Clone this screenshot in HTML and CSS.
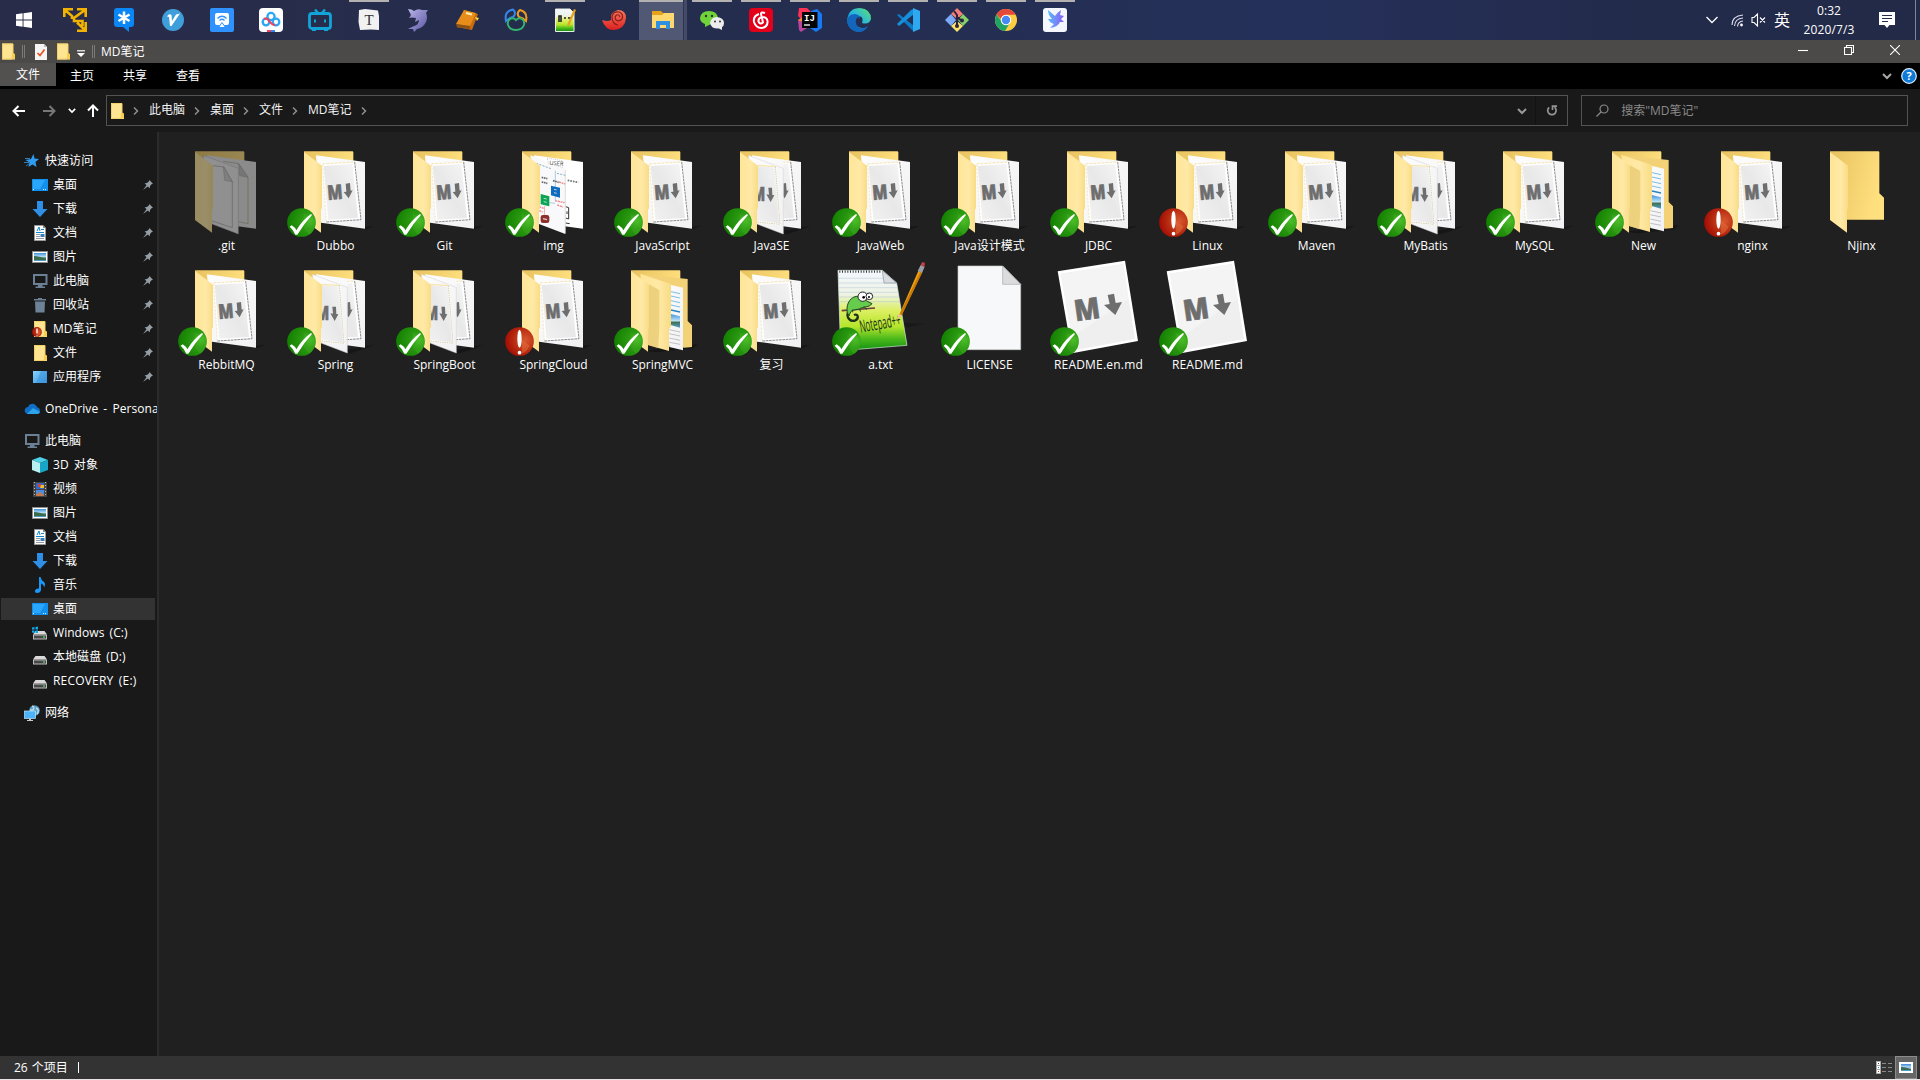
FILE: index.html
```html
<!DOCTYPE html>
<html lang="zh-CN">
<head>
<meta charset="utf-8">
<title>MD笔记</title>
<link rel="stylesheet" href="styles.css">
</head>
<body>
<svg class="sprite" width="0" height="0" aria-hidden="true">
  <defs>
    <linearGradient id="gBack" x1="0" x2="1" y1="0" y2="0.3"><stop offset="0" stop-color="#e8c25f"/><stop offset="1" stop-color="#ffe07f"/></linearGradient>
    <linearGradient id="gFlap" x1="0" x2="1"><stop offset="0" stop-color="#ffe596"/><stop offset=".6" stop-color="#ffe9a6"/><stop offset="1" stop-color="#f8dc86"/></linearGradient>
    <linearGradient id="gPaper" x1="0" x2="1" y1="0" y2="1"><stop offset="0" stop-color="#fdfdfd"/><stop offset="1" stop-color="#f1f1f3"/></linearGradient>
    <linearGradient id="gPhoto" x1="1" x2="0" y1="0" y2="1"><stop offset="0" stop-color="#f6f6f6"/><stop offset=".5" stop-color="#e8e8e8"/><stop offset="1" stop-color="#f2f2f2"/></linearGradient>
    <radialGradient id="gOk" cx=".8" cy=".45" r=".8"><stop offset="0" stop-color="#56c92f"/><stop offset=".35" stop-color="#2c9a12"/><stop offset="1" stop-color="#128000"/></radialGradient>
    <radialGradient id="gBad" cx=".7" cy=".45" r=".7"><stop offset="0" stop-color="#d8582f"/><stop offset=".6" stop-color="#b62a10"/><stop offset="1" stop-color="#a30c04"/></radialGradient>
    <linearGradient id="gSky" x1="0" x2="0" y1="0" y2="1"><stop offset="0" stop-color="#3f93dd"/><stop offset=".5" stop-color="#bfe3f8"/><stop offset=".6" stop-color="#44714f"/><stop offset="1" stop-color="#4aa0d0"/></linearGradient>
    <linearGradient id="gNote" x1="0" x2="0" y1="0" y2="1"><stop offset="0" stop-color="#f4f8ff"/><stop offset=".3" stop-color="#eef3e4"/><stop offset=".5" stop-color="#dcef62"/><stop offset=".7" stop-color="#b5e52c"/><stop offset=".85" stop-color="#4dba1c"/><stop offset="1" stop-color="#0e8f10"/></linearGradient>
    <linearGradient id="gEdge" x1="0" x2="1" y1="1" y2="0"><stop offset="0" stop-color="#0c59a4"/><stop offset=".5" stop-color="#25b4e6"/><stop offset="1" stop-color="#5fe06a"/></linearGradient>
    <linearGradient id="gBird" x1="0" x2="1"><stop offset="0" stop-color="#5ab8ff"/><stop offset="1" stop-color="#8a5cf0"/></linearGradient>
    <linearGradient id="gBlue" x1="0" x2="1" y1="0" y2="1"><stop offset="0" stop-color="#83d3ff"/><stop offset="1" stop-color="#3a93dc"/></linearGradient>
    <linearGradient id="gShell" x1="0" x2="0" y1="0" y2="1"><stop offset="0" stop-color="#f47a5c"/><stop offset="1" stop-color="#de1f1f"/></linearGradient>
    <linearGradient id="gDol" x1="0" x2="1" y1="0" y2="1"><stop offset="0" stop-color="#b9b4e8"/><stop offset="1" stop-color="#57539f"/></linearGradient>
    <clipPath id="cFront"><path d="M129 70H205V282H126V210L129 205Z"/></clipPath>
    <clipPath id="cBehind"><path d="M205 60H262V270H205Z"/></clipPath>
  </defs>

  <!-- Large folder parts, 3 units per pixel -->
  <symbol id="photo" viewBox="6 0 327 288">
    <path d="M130 72L227 66L246 239L142 246Z" fill="#fff"/>
    <path d="M134 78L220 72L237 234L148 239Z" fill="url(#gPhoto)"/>
    <path d="M130 72L227 66" stroke="#f0d78c" stroke-width="2" stroke-dasharray="9 3"/>
    <path d="M131 74L142 245" stroke="#eedba6" stroke-width="2" stroke-dasharray="7 4"/>
    <path d="M227 66L246 239L142 246" fill="none" stroke="#555" stroke-width="2" stroke-dasharray="8 2"/>
    <text class="mark" transform="translate(147 180) rotate(-5) scale(.78 1)" font-size="60">M</text>
    <path d="M200 131L213 129L215 152L221 151L209 175L194 156L202 155Z" fill="#6e6e6e"/>
  </symbol>
  <symbol id="folder" viewBox="6 0 327 288">
    <path d="M75 34H221L223 36V160L237 173V239H75Z" fill="url(#gBack)"/>
    <path d="M75 36L129 77V205L126 210V278L75 240Z" fill="url(#gFlap)"/>
  </symbol>
  <symbol id="folder-md" viewBox="6 0 327 288">
    <path d="M246 262L285 257L262 268Z" fill="#161616"/>
    <path d="M75 34H221L223 36V239H75Z" fill="url(#gBack)"/>
    <path d="M111 46L258 66V266L126 248Z" fill="url(#gPaper)"/>
    <use href="#photo" x="6" y="0" width="327" height="288"/>
    <path d="M75 36L129 77V205L126 210V278L75 240Z" fill="url(#gFlap)"/>
  </symbol>
  <symbol id="folder-md2" viewBox="6 0 327 288">
    <path d="M205 272L285 257L262 268L210 284Z" fill="#161616"/>
    <path d="M75 34H221L223 36V239H75Z" fill="url(#gBack)"/>
    <path d="M111 46L258 66V266L126 248Z" fill="url(#gPaper)"/>
    <g clip-path="url(#cBehind)"><use href="#photo" x="6" y="0" width="327" height="288"/></g>
    <path d="M100 46L205 85V282L126 252Z" fill="url(#gPaper)" stroke="#cfcfcf" stroke-width="1.5"/>
    <g clip-path="url(#cFront)">
      <path d="M120 77L181 79L195 253L120 244Z" fill="url(#gPhoto)" stroke="#fff" stroke-width="5"/>
      <path d="M129 77L181 79" fill="none" stroke="#f0d27a" stroke-width="2.4"/>
      <path d="M181 79L195 253L126 246" fill="none" stroke="#c4b98e" stroke-width="2" stroke-dasharray="5 2"/>
      <text class="mark" transform="translate(111 184) scale(.68 1)" font-size="60">M</text>
      <path d="M160 143H171L172 165L178 166L167 186L154 163L162 164Z" fill="#6e6e6e"/>
    </g>
    <path d="M75 36L129 77V205L126 210V278L75 240Z" fill="url(#gFlap)"/>
  </symbol>
  <symbol id="folder-git" viewBox="6 0 327 288">
    <g opacity=".55">
      <path d="M75 34H221L223 36V239H75Z" fill="url(#gBack)"/>
      <path d="M111 46L258 66V266L126 248Z" fill="#e4e4e4"/>
      <path d="M160 64L206 71L234 112V251L206 245" fill="none" stroke="#a39c80" stroke-width="2"/>
      <path d="M206 71L209 107L234 112Z" fill="#bdbdbd" stroke="#999" stroke-width="1.500"/>
      <path d="M100 46L205 85V282L126 252Z" fill="#ececec" stroke="#aaa" stroke-width="1.500"/>
      <path d="M129 77L162 81L187 125V263L127 243" fill="none" stroke="#999" stroke-width="2"/>
      <path d="M160 80L164 121L187 125Z" fill="#cdcdcd" stroke="#999" stroke-width="1.500"/>
      <path d="M75 36L129 77V205L126 210V278L75 240Z" fill="url(#gFlap)"/>
    </g>
  </symbol>
  <symbol id="folder-img" viewBox="6 0 327 288">
    <path d="M75 34H221L223 36V239H75Z" fill="url(#gBack)"/>
    <path d="M111 46L258 66V266L126 248Z" fill="#fff"/>
    <path d="M212 121L244 127" stroke="#777" stroke-width="5" stroke-dasharray="5 3"/>
    <path d="M206 200L215 203V237L206 234M206 249L218 251M210 214V222" fill="none" stroke="#333" stroke-width="3"/>
    <path d="M100 46L205 85V282L126 252Z" fill="#f9f9fb"/>
    <path d="M205 90V280" stroke="#ccc" stroke-width="2"/>
    <path d="M150 54L196 62V82L155 70Z" fill="#fff" stroke="#999" stroke-width="1.500" stroke-dasharray="3 3"/>
    <text class="tiny" x="157" y="74" font-size="17" transform="rotate(5 157 74)">USER</text>
    <path d="M118 70L162 86M180 100L205 106" stroke="#7fb0c2" stroke-width="3" stroke-dasharray="6 4"/>
    <path d="M175 92V185M158 188L174 190" stroke="#7cb8d6" stroke-width="2"/>
    <path d="M134 112L151 116M134 126L151 130M168 122L185 127" stroke="#666" stroke-width="5" stroke-dasharray="5 2"/>
    <path d="M186 126L204 132M175 182L203 188M181 195L198 201M127 200L140 205M127 212L137 216" stroke="#f0868a" stroke-width="4" stroke-dasharray="6 2"/>
    <path d="M162 137L189 143V173L162 166Z" fill="#0d6cbf"/>
    <path d="M131 162L157 169V199L131 193Z" fill="#0ba452"/>
    <path d="M171 148L179 150M171 158L179 160M140 175L149 177M140 185L149 187" stroke="#fff" stroke-width="3" opacity=".7"/>
    <path d="M143 198L142 226" stroke="#e88" stroke-width="2"/>
    <rect x="131" y="225" width="26" height="24" rx="7" fill="#8c2f2f"/><path d="M138 236L150 239" stroke="#e8c8c8" stroke-width="4"/>
    <path d="M75 36L129 77V205L126 210V278L75 240Z" fill="url(#gFlap)"/>
  </symbol>
  <symbol id="folder-docs" viewBox="6 0 327 288">
    <path d="M120 275L275 255L262 268L150 280Z" fill="#161616"/>
    <path d="M75 34H221L223 36V239H75Z" fill="url(#gBack)"/>
    <path d="M103 45L245 60V186L258 199V264L235 266L150 250Z" fill="#f3d277"/>
    <path d="M170 72L231 86V274L190 264Z" fill="url(#gPaper)"/>
    <path d="M195 98L222 104M195 111L222 117M195 125L222 131M195 138L222 144" stroke="#79bfe6" stroke-width="3"/>
    <path d="M195 153L222 159" stroke="#2383c6" stroke-width="4"/>
    <path d="M194 165L222 172V206L194 198Z" fill="url(#gSky)"/>
    <path d="M190 212L222 219M190 224L222 231M190 237L222 244M190 250L222 256" stroke="#b5b5ba" stroke-width="2.500"/>
    <path d="M103 45L195 75V203L189 209V276L126 258Z" fill="url(#gFlap)"/>
    <path d="M129 76L160 93V207L157 268L126 258Z" fill="#e8ca72" opacity=".75"/>
    <path d="M75 36L129 77V205L126 210V278L75 240Z" fill="url(#gFlap)"/>
  </symbol>
  <symbol id="file-md" viewBox="6 0 327 288">
    <path d="M47 37L249 5L288 246L90 283Z" fill="#fff"/>
    <path d="M56 44L243 15L279 240L97 274Z" fill="#efefef"/>
    <path d="M56 44L243 15L260 120L90 235Z" fill="#f4f4f4"/>
    <text class="mark" transform="translate(101 187) rotate(-8) scale(.9 1)" font-size="88">M</text>
    <path d="M197 108L216 104L221 132L240 129L220 168L186 138L203 135Z" fill="#6e6e6e"/>
  </symbol>
  <symbol id="file-blank" viewBox="6 0 327 288">
    <path d="M75 21H209L263 76V272H75Z" fill="#f7f8fa" stroke="#c9c9c9" stroke-width="2"/>
    <path d="M209 21V76H263Z" fill="#dcdcde" stroke="#a9a9ab" stroke-width="2"/>
  </symbol>
  <symbol id="file-note" viewBox="6 0 327 288">
    <path d="M230 190L300 195L250 205Z" fill="#191919"/>
    <path d="M42 34H175L218 72L249 259L50 275Z" fill="url(#gNote)" stroke="#d9efe0" stroke-width="2"/>
    <path d="M43 58H190M44 72H216M45 86H219M45 100H221M46 114H224M46 128H226" stroke="#9db7d8" stroke-width="1.600" opacity=".7"/>
    <path d="M46 38H170" stroke="#333" stroke-width="7" stroke-dasharray="3 5"/>
    <path d="M175 35L180 72H218Z" fill="#d9dde2" stroke="#8a8f98" stroke-width="2"/>
    <path d="M53 155L153 147" stroke="#6a3f3f" stroke-width="5"/>
    <path d="M72 160C66 176 80 190 94 184C106 178 102 162 90 168" fill="none" stroke="#1e3018" stroke-width="7"/>
    <path d="M70 162C64 130 84 110 104 112L132 128L144 134C136 146 118 142 106 150L84 154C80 160 76 164 76 170Z" fill="#67cc4e" stroke="#1d4a1c" stroke-width="3"/>
    <path d="M86 152V160M106 150L110 158M120 142L128 152" stroke="#1d4a1c" stroke-width="3"/>
    <circle cx="116" cy="113" r="14" fill="#fff" stroke="#222" stroke-width="3"/><circle cx="136" cy="112" r="10" fill="#fff" stroke="#222" stroke-width="3"/>
    <circle cx="119" cy="115" r="4"/><circle cx="135" cy="114" r="3"/>
    <text class="npp" transform="translate(110 221) rotate(-10) scale(.46 1)" font-size="52">Notepad++</text>
    <path d="M219 182L283 36L294 41L233 169Z" fill="#f0a30f"/><path d="M228 163L289 39L294 41L233 169Z" fill="#c97808"/>
    <path d="M219 182L221 166L233 169Z" fill="#e8c79a"/>
    <path d="M281 36L290 18L302 23L294 42Z" fill="#9b9fa5"/><path d="M290 18L294 10Q300 8 303 13L301 24Z" fill="#c14048"/>
  </symbol>
  <symbol id="ok" viewBox="0 0 87 87">
    <circle cx="43.500" cy="43.500" r="43" fill="url(#gOk)"/>
    <path d="M50 15L86 44Q84 68 66 80L50 60Z" fill="#3fae22" opacity=".45"/>
    <path d="M8 56L14 52Q24 58 28 67Q46 36 72 18L75 21Q52 46 31 80H25Q18 64 8 56Z" fill="#fff"/>
  </symbol>
  <symbol id="bad" viewBox="0 0 87 87">
    <circle cx="43.500" cy="43.500" r="43" fill="url(#gBad)"/>
    <path d="M50 37L74 56Q64 76 50 80Z" fill="#e8713c" opacity=".5"/>
    <ellipse cx="43.500" cy="35" rx="6.500" ry="27" fill="#fff"/><circle cx="43.500" cy="77" r="5.500" fill="#fff"/>
  </symbol>

  <!-- Small icons -->
  <symbol id="s-folder" viewBox="0 0 16 16"><path d="M2 0H13V11H15V16H2Z" fill="#ffe592"/><path d="M2.500.5H13V10.500L12 15.500H2.500Z" fill="none" stroke="#f3d068"/><path d="M12 10.500L13 9.500L15 10.500V15.500H12Z" fill="#f7cf4c"/></symbol>
  <symbol id="s-check" viewBox="0 0 12 16"><path d="M0 0H9L12 3V16H0Z" fill="#f4f4f4"/><path d="M9 0V3H12Z" fill="#bbb"/><path d="M2.500 9L5 11.500L9.500 5.500" fill="none" stroke="#e8501c" stroke-width="1.700"/></symbol>
  <symbol id="s-star" viewBox="0 0 16 16"><path d="M9.500 1L10.500 5.500L15 6L11.500 9L12.500 14L8.500 11.500L4.500 14L5.500 9.500L1.500 7L7 6Z" fill="#2f9cf0"/><path d="M1 5.500H6M0 9.500H5M2 13L6 10" stroke="#2f7fc0" stroke-width="1"/></symbol>
  <symbol id="s-desk" viewBox="0 0 16 16"><rect y="2" width="16" height="12" fill="#1190ee"/><path d="M1 3H13L8 12H1Z" fill="#2ba6ff"/><path d="M1 12.500H3M11 12.500H15" stroke="#d8f0ff" stroke-dasharray="1 1"/></symbol>
  <symbol id="s-down" viewBox="0 0 16 16"><path d="M5 0H11V8H15.500L8 16L.5 8H5Z" fill="#2f8ee6"/></symbol>
  <symbol id="s-doc" viewBox="0 0 16 16"><path d="M2.500.5H11L13.500 3V15.500H2.500Z" fill="#fff" stroke="#9a9a9a"/><path d="M11 0V3H14Z" fill="#888"/><path d="M5 6L7 2L8 6M9 4.500H12M4 7.500H12" stroke="#1587c9" fill="none"/><path d="M4 9.500H8M4 11.500H8M4 13.500H12" stroke="#9a9a9a"/><rect x="8.500" y="9" width="4" height="3" fill="#2f7fbf"/></symbol>
  <symbol id="s-pic" viewBox="0 0 16 16"><rect x=".5" y="2.500" width="15" height="11" fill="#fff" stroke="#8d8d8d"/><rect x="2" y="4" width="12" height="8" fill="url(#gSky)"/><path d="M2 7Q7 7 14 10V11H2Z" fill="#3c6a4d"/></symbol>
  <symbol id="s-pc" viewBox="0 0 16 16"><rect x="2" y="2" width="12.500" height="9" fill="none" stroke="#6b8095" stroke-width="2"/><path d="M6 12H10.500V13.500H13V15H3.500V13.500H6Z" fill="#6b8095"/></symbol>
  <symbol id="s-bin" viewBox="0 0 16 16"><path d="M2 2H6V1H10V2H14V3.500H2ZM3 4.500H13L12.500 15.500H3.500Z" fill="#6d8296"/></symbol>
  <symbol id="s-app" viewBox="0 0 16 16"><rect x="1" y="2" width="14" height="12" fill="url(#gBlue)"/><path d="M9 2H15V14H4Z" fill="#3a93dc" opacity=".55"/></symbol>
  <symbol id="s-cloud" viewBox="0 0 16 12"><path d="M2 10Q0 9 1 6Q2 4 4 4Q6 0 10 1Q12 2 13 4Q16 5 16 8Q16 11 13 11H3Z" fill="#0f6fc6"/><path d="M3 11L9 5L16 9Q15 11 13 11Z" fill="#2da4ea"/></symbol>
  <symbol id="s-cube" viewBox="0 0 16 16"><path d="M0 3L8 0L16 3L8 6Z" fill="#4fd2e8"/><path d="M0 3L8 6V16L0 13Z" fill="#b9f1f3"/><path d="M16 3L8 6V16L16 13Z" fill="#17a6c8"/></symbol>
  <symbol id="s-film" viewBox="0 0 16 16"><rect x="1" y="1" width="14" height="15" fill="#444"/><path d="M2.500 1V16M13.500 1V16" stroke="#bbb" stroke-dasharray="1 2"/><rect x="4" y="2" width="8" height="6" fill="#3465c9"/><rect x="4" y="9" width="8" height="6" fill="#4b8be0"/><path d="M6 3H9V6H6Z" fill="#d6452f"/><path d="M9 4H12V7H8Z" fill="#e8c22f"/><path d="M4 13L8 11L12 14V15H4Z" fill="#c47a4f"/></symbol>
  <symbol id="s-music" viewBox="0 0 16 16"><path d="M7 0H8.500Q9 3 12 5Q14 7 12 10.500Q12 7.500 9 6.500V13Q8.500 16 5 16Q2.500 15.500 3 13.500Q4 11 7 11.500Z" fill="#1b96f5"/></symbol>
  <symbol id="s-disk" viewBox="0 0 16 16"><path d="M3.500 7H12.500L15 10.500H1Z" fill="#d9d9d9"/><rect x="1" y="10.500" width="14" height="5" fill="#bdbdbd"/><rect x="2" y="11.500" width="12" height="3" fill="#474747"/><rect x="11" y="12.500" width="2" height="1" fill="#5f5"/></symbol>
  <symbol id="s-win" viewBox="0 0 16 16"><path d="M3.500 6H12.500L15 9.500H1Z" fill="#d9d9d9"/><rect x="1" y="9.500" width="14" height="5" fill="#bdbdbd"/><rect x="2" y="10.500" width="12" height="3" fill="#474747"/><rect x="11" y="11.500" width="2" height="1" fill="#5f5"/><path d="M0 2.500L2.500 2V4.500H0ZM3.500 2L6 1.500V4.500H3.500ZM0 5.500H2.500V8L0 7.500ZM3.500 5.500H6V8H3.500Z" fill="#11a9ee"/></symbol>
  <symbol id="s-net" viewBox="0 0 16 16"><circle cx="10.500" cy="5.500" r="5.300" fill="#5a9cc0"/><path d="M8 1Q11 2 9 5L6 5M12 3Q16 5 13 9" fill="none" stroke="#b8dcef" stroke-width="1.500"/><rect x=".5" y="6" width="11" height="7.500" fill="#4bb4fb" stroke="#bfe5ff" stroke-width=".7"/><path d="M5 13.500H7V15H9V16H3V15H5Z" fill="#c5ccd2"/></symbol>
  <symbol id="s-pin" viewBox="0 0 10 10"><path d="M6.300 0L10 3.700L8.800 4L7 6L6.800 8.300L4.700 6.500L0 10L3.500 5.300L1.700 3.300L4 3L6 1.200Z" fill="#949ea6"/></symbol>
  <symbol id="sep" viewBox="0 0 6 8"><path d="M1 .5L4.500 4L1 7.500" fill="none" stroke="#8f8f8f" stroke-width="1.500"/></symbol>
  <symbol id="chev" viewBox="0 0 10 8"><path d="M1 2L5 6L9 2" fill="none" stroke="currentColor" stroke-width="2"/></symbol>
</svg>

<div class="taskbar">
  <div class="start"><svg width="16" height="16" viewBox="0 0 16 16" fill="#fff"><path d="M0 2.300L6.600 1.300V7.500H0ZM7.500 1.200L16 0V7.500H7.500ZM0 8.400H6.600V14.700L0 13.700ZM7.500 8.400H16V16L7.500 14.800Z"/></svg></div>
  <div class="task"><svg viewBox="0 0 24 24"><path d="M1.300 9V1.300H10M2 2L9 8V11M22.700 9V1.300H14M22 2L11 10V13H19.500V18M22.700 14V22.700H14M22 22L14 14.500" fill="none" stroke="#f2b200" stroke-width="2.600"/></svg></div>
  <div class="task"><svg viewBox="0 0 24 24"><path d="M5 0H19Q22 0 22 3V16Q22 19 19 19H17V24L11 19H5Q2 19 2 16V3Q2 0 5 0Z" fill="#0a86f5"/><path d="M12 3.500V16M6.500 6.500L17.500 13M17.500 6.500L6.500 13" stroke="#fff" stroke-width="2.500"/></svg></div>
  <div class="task"><svg viewBox="0 0 24 24"><circle cx="12" cy="12" r="11" fill="#3f9fdb"/><path d="M6 8.500Q8 5 10.500 7L11 13L15 6.500L19 5.500L10.500 18H9Q8.500 13 8 9Z" fill="#fff"/></svg></div>
  <div class="task"><svg viewBox="0 0 24 24"><rect width="24" height="24" rx="2" fill="#2f92ff"/><rect x="5" y="5" width="14" height="12" rx="2" fill="#fff"/><path d="M7.500 10.500Q12 6 16.500 10.500M9.500 12.500Q12 10 14.500 12.500" fill="none" stroke="#2f92ff" stroke-width="1.300"/><path d="M8.500 19.500L12 14.500L15.500 19.500Z" fill="#fff" stroke="#2f92ff"/></svg></div>
  <div class="task"><svg viewBox="0 0 24 24"><rect width="24" height="24" rx="4" fill="#fff"/><circle cx="12" cy="8.500" r="3.600" fill="none" stroke="#2aa7f5" stroke-width="2.300"/><circle cx="7" cy="14" r="3.300" fill="none" stroke="#2aa7f5" stroke-width="2.300"/><circle cx="17" cy="14" r="3.300" fill="none" stroke="#2aa7f5" stroke-width="2.300"/><path d="M5 11Q8 9 11 14Q13 17 16 17" fill="none" stroke="#f33f58" stroke-width="2"/><path d="M8 22H12V24H8Z" fill="#f33f58"/><path d="M12 22H16V24H12Z" fill="#2a8bf5"/></svg></div>
  <div class="task"><svg viewBox="0 0 24 24"><path d="M7 1.500L10 5M17 1.500L14 5" stroke="#12a4d8" stroke-width="2.400"/><rect x="1.500" y="5.500" width="21" height="15" rx="2.500" fill="none" stroke="#12a4d8" stroke-width="2.800"/><path d="M7 11.500V14.500M17 11.500V14.500" stroke="#12a4d8" stroke-width="2"/><path d="M4 21H8V23H4ZM16 21H20V23H16Z" fill="#12a4d8"/></svg></div>
  <div class="task open"><svg viewBox="0 0 24 24"><path d="M2 2L8 1L21 2.500L22 8V22L14 21.500L3 22L1.500 14Z" fill="#f1f1f1"/><text x="12" y="17" font-size="15" text-anchor="middle" font-family="Liberation Serif, serif" fill="#333">T</text></svg></div>
  <div class="task"><svg viewBox="0 0 24 24"><path d="M2 1Q6 1 8 3Q12 0 16 2L22 2L20 5Q22 9 20 14Q17 20 11 21L8 24L7 21L2 21L7 18.500Q13 17 13 12L9 14L10 10Q5 9 3 10Q6 7 4 5Z" fill="url(#gDol)"/></svg></div>
  <div class="task"><svg viewBox="0 0 24 24"><path d="M9 2L23 6L17 22L2 19Z" fill="#c96a0c"/><path d="M9 2L21 5L15 18L1 16Z" fill="#e88d1c"/><path d="M1 16L15 18L15 21L2 19.500Z" fill="#8d5416"/><path d="M11 5L17 6.500" stroke="#fff0b0" stroke-width="2"/><path d="M20 9L24 10L22 13Z" fill="#ffd23d"/></svg></div>
  <div class="task"><svg viewBox="0 0 24 24" fill="none" stroke-width="2"><path d="M2 13Q0 3 9 1.500Q13 5 9 9Q5 10 2 13Z" stroke="#3487ee"/><path d="M22 13Q24 4 16 2Q12 5 15 9Q19 10 22 13Z" stroke="#f29a1f"/><path d="M12 12Q15 9 18 11Q21 13 20 17Q18 22 12 22Q6 22 4 17Q3 13 6 11Q9 9 12 12Z" stroke="#33b56b"/></svg></div>
  <div class="task open"><svg viewBox="0 0 24 24"><path d="M2.500 1H17L21 5V23.500H2.500Z" fill="url(#gNote)" stroke="#e8efe4"/><path d="M6 14V8H8V14M11 10H13M15 10H18" fill="none" stroke="#222" stroke-width="1.600"/><path d="M14 17L21 1L23 2L16 18Z" fill="#e9a21c"/></svg></div>
  <div class="task"><svg viewBox="0 0 24 24"><path d="M0 12Q6 14 9 12Q8 4 16 2Q24 2 24 10Q23 21 12 22Q3 22 0 12Z" fill="url(#gShell)"/><path d="M18 9Q17 6 14.500 7Q12 9 14 12Q17 14 20 11Q22 6 17 4Q11 3 10 9Q10 16 16 17" fill="none" stroke="#8d1d1d" stroke-width="1.200"/></svg></div>
  <div class="task open active"><svg viewBox="0 0 24 24"><path d="M1 3H10L12 5H23V20H1Z" fill="#e6a21c"/><path d="M1 7H11L13 5H23V20H1Z" fill="#ffd970"/><path d="M5 13H19V21H15V17H9V21H5Z" fill="#2f8fe0"/></svg></div>
  <div class="task open"><svg viewBox="0 0 24 24"><path d="M9 3Q17 3 18 10Q12 10 11 16L5 19V16Q0 14 0 10Q1 3 9 3Z" fill="#6fd43a"/><path d="M17 9Q24 10 24 15Q24 18 22 19V22L19 20.500Q11 21 10 15Q11 9 17 9Z" fill="#ededed"/><g fill="#333"><circle cx="6" cy="8" r="1.200"/><circle cx="12" cy="8" r="1.200"/><circle cx="15" cy="13.500" r="1"/><circle cx="20" cy="13.500" r="1"/></g></svg></div>
  <div class="task open"><svg viewBox="0 0 24 24"><rect width="24" height="24" rx="4" fill="#e2001b"/><path d="M10 6Q4 8 5 14Q7 20 12.500 20Q19 19 18.500 13Q18 9 13 9Q9 10 9.500 13.500Q11 17 14 14.500L12 6Q12 3.500 16 5" fill="none" stroke="#fff" stroke-width="2"/></svg></div>
  <div class="task open"><svg viewBox="0 0 24 24"><path d="M1 0H9L13 4L4 12L0 8Z" fill="#fc3158"/><path d="M13 3L19 1L24 6V20L18 24L12 20Z" fill="#1779f5"/><path d="M0 12L5 9V20L9 20L3 24L1 22Z" fill="#b8459c"/><path d="M0 12L5 9V14Z" fill="#f98a1f"/><rect x="4" y="4" width="15.500" height="16" fill="#050505"/><text x="6" y="13" font-size="9" font-weight="700" fill="#fff" font-family="Liberation Mono, monospace">IJ</text><path d="M6 17H12" stroke="#fff" stroke-width="1.300"/></svg></div>
  <div class="task open"><svg viewBox="0 0 24 24"><path d="M0 13Q1 0 13 0Q24 1 24 11Q22 17 15 15Q17 9 12 8Q7 9 8 15Q10 21 19 20Q15 25 9 23.500Q1 21 0 13Z" fill="url(#gEdge)"/><path d="M0 13Q1 6 8 6Q14 7 13 11Q12 8 10 10Q7 14 11 19Q15 22 21 18Q18 24 11 24Q1 22 0 13Z" fill="#1267bd"/></svg></div>
  <div class="task open"><svg viewBox="0 0 24 24"><path d="M1 7L3 6L18 18V23L16 22Z" fill="#0a7bc4"/><path d="M1 16L3 18L18 6V1L15 2Z" fill="#1690da"/><path d="M17 0L24 3V21L17 24Z" fill="#2fa8f2"/></svg></div>
  <div class="task open"><svg viewBox="0 0 24 24"><path d="M12 0L18 6L12 11L6 6Z" fill="#f37d79"/><path d="M18 6L24 12L18 18L13 12Z" fill="#85d268"/><path d="M6 6L11 12L6 18L0 12Z" fill="#7baaf7"/><path d="M12 13L18 18L12 24L6 18Z" fill="#fbe36a"/><path d="M9 3L12 7V18M12 9L17 13" fill="none" stroke="#2b2340" stroke-width="2"/><circle cx="12" cy="18" r="2" fill="#2b2340"/><circle cx="17" cy="12.500" r="2" fill="#2b2340"/></svg></div>
  <div class="task open"><svg viewBox="0 0 24 24"><circle cx="12" cy="12" r="11" fill="#ffcd42"/><path d="M2.500 6.500A11 11 0 0 1 21.600 6.700H12Q8 7 7 11Z" fill="#e5493a"/><path d="M2.500 6.500A11 11 0 0 0 11 23L15.500 15.500Q9 18 7 12.500Z" fill="#1fa463"/><circle cx="12" cy="12" r="5.200" fill="#fff"/><circle cx="12" cy="12" r="4.200" fill="#4688f4"/></svg></div>
  <div class="task open"><svg viewBox="0 0 24 24"><rect width="24" height="24" rx="3" fill="#f4f7ff"/><path d="M5 2L12 8Q15 4 18 2L17 7L21 8L18 11L21 14L17 14Q15 19 7 20L11 16Q7 15 5 11L9 11Q5 7 5 2Z" fill="url(#gBird)"/></svg></div>

  <div class="tray">
    <svg width="12" height="8" viewBox="0 0 12 8"><path d="M.5 1L6 6.500L11.500 1" fill="none" stroke="#fff" stroke-width="1.300"/></svg>
    <svg class="wifi" width="13" height="13" viewBox="0 0 13 13" fill="none" stroke="#dde" stroke-width="1.100"><path d="M1 11Q1 2 12 1M3.500 12Q4 4.500 12 4M6.500 12.500Q7 7.500 12 7"/><circle cx="10.500" cy="11" r="1.400" fill="#fff" stroke="none"/></svg>
    <svg class="vol" width="15" height="14" viewBox="0 0 15 14" fill="none" stroke="#fff" stroke-width="1.100"><path d="M1 4.500H3L6.500 1V13L3 9.500H1ZM9 4.500L14 9.500M14 4.500L9 9.500"/></svg>
    <span class="ime">英</span>
    <div class="clock"><span>0:32</span><span>2020/7/3</span></div>
    <svg class="note" width="16" height="16" viewBox="0 0 16 16"><path d="M0 0H16V13H10.500L8 16L5.500 13H0Z" fill="#fff"/><path d="M3 3.500H13M3 6.500H13M3 9.500H9" stroke="#252d4c" stroke-width="1.200"/></svg>
    <i class="peek"></i>
  </div>
</div>

<div class="titlebar">
  <svg class="tb-folder" width="16" height="17"><use href="#s-folder"/></svg>
  <i class="grip g1"></i>
  <svg class="tb-check" width="12" height="16"><use href="#s-check"/></svg>
  <svg class="tb-folder2" width="16" height="17"><use href="#s-folder"/></svg>
  <svg class="tb-drop" width="8" height="7" viewBox="0 0 8 7"><path d="M0 .8H8" stroke="#fff" stroke-width="1.200"/><path d="M0 3H8L4 7Z" fill="#fff"/></svg>
  <i class="grip g2"></i>
  <span class="title">MD笔记</span>
  <div class="controls">
    <svg viewBox="0 0 10 10"><path d="M0 5.500H10"/></svg>
    <svg viewBox="0 0 10 10"><path d="M.5 2.500H7.500V9.500H.5ZM2.500 2.500V.5H9.500V7.500H7.500"/></svg>
    <svg viewBox="0 0 10 10"><path d="M0 0L10 10M10 0L0 10"/></svg>
  </div>
</div>

<div class="ribbon">
  <span class="tab file">文件</span><span class="tab">主页</span><span class="tab">共享</span><span class="tab">查看</span>
  <svg class="expand" width="10" height="8"><use href="#chev"/></svg>
  <svg class="help" width="16" height="16" viewBox="0 0 16 16"><circle cx="8" cy="8" r="7.300" fill="#0e7ad8" stroke="#dbeafa" stroke-width="1.200"/><text x="8" y="12" font-size="11" font-weight="700" text-anchor="middle" fill="#fff" font-family="Open Sans, sans-serif">?</text></svg>
</div>

<div class="navrow">
  <svg class="back" width="13" height="12" viewBox="0 0 13 12"><path d="M13 6H2M6.500 1L1.500 6L6.500 11" fill="none" stroke="#fff" stroke-width="2"/></svg>
  <svg class="fwd" width="13" height="12" viewBox="0 0 13 12"><path d="M0 6H11M6.500 1L11.500 6L6.500 11" fill="none" stroke="#777" stroke-width="2"/></svg>
  <svg class="hist" width="8" height="7"><use href="#chev"/></svg>
  <svg class="up" width="12" height="13" viewBox="0 0 12 13"><path d="M6 13V2M1 6.500L6 1.500L11 6.500" fill="none" stroke="#fff" stroke-width="2"/></svg>
  <div class="address">
    <svg class="a-folder" width="16" height="16"><use href="#s-folder"/></svg>
    <svg class="sep" width="6" height="8"><use href="#sep"/></svg><span>此电脑</span>
    <svg class="sep" width="6" height="8"><use href="#sep"/></svg><span>桌面</span>
    <svg class="sep" width="6" height="8"><use href="#sep"/></svg><span>文件</span>
    <svg class="sep" width="6" height="8"><use href="#sep"/></svg><span>MD笔记</span>
    <svg class="sep" width="6" height="8"><use href="#sep"/></svg>
    <svg class="a-drop" width="10" height="8"><use href="#chev"/></svg>
    <div class="refresh"><svg width="12" height="13" viewBox="0 0 12 13"><path d="M8.500 3.200A4.200 4.200 0 1 1 3.200 3.300M6.500 6V2.200H11" fill="none" stroke="#949494" stroke-width="1.700"/><path d="M1.500 2.200H5V5.500" fill="none" stroke="#949494" stroke-width="0"/></svg></div>
  </div>
  <div class="search">
    <svg width="13" height="13" viewBox="0 0 13 13" fill="none" stroke="#8a8a8a" stroke-width="1.200"><circle cx="8" cy="5" r="4"/><path d="M5 8L.5 12.500"/></svg>
    <span>搜索"MD笔记"</span>
  </div>
</div>

<div class="body">
  <div class="side">
    <div class="row top"><svg><use href="#s-star"/></svg><span>快速访问</span></div>
    <div class="row"><svg><use href="#s-desk"/></svg><span>桌面</span><svg class="pin"><use href="#s-pin"/></svg></div>
    <div class="row"><svg><use href="#s-down"/></svg><span>下载</span><svg class="pin"><use href="#s-pin"/></svg></div>
    <div class="row"><svg><use href="#s-doc"/></svg><span>文档</span><svg class="pin"><use href="#s-pin"/></svg></div>
    <div class="row"><svg><use href="#s-pic"/></svg><span>图片</span><svg class="pin"><use href="#s-pin"/></svg></div>
    <div class="row"><svg><use href="#s-pc"/></svg><span>此电脑</span><svg class="pin"><use href="#s-pin"/></svg></div>
    <div class="row"><svg><use href="#s-bin"/></svg><span>回收站</span><svg class="pin"><use href="#s-pin"/></svg></div>
    <div class="row"><svg><use href="#s-folder"/><use href="#bad" x="0" y="6" width="10" height="10"/></svg><span>MD笔记</span><svg class="pin"><use href="#s-pin"/></svg></div>
    <div class="row"><svg><use href="#s-folder"/></svg><span>文件</span><svg class="pin"><use href="#s-pin"/></svg></div>
    <div class="row"><svg><use href="#s-app"/></svg><span>应用程序</span><svg class="pin"><use href="#s-pin"/></svg></div>
    <div class="row top gap"><svg><use href="#s-cloud"/></svg><span>OneDrive - Persona</span></div>
    <div class="row top gap"><svg><use href="#s-pc"/></svg><span>此电脑</span></div>
    <div class="row"><svg><use href="#s-cube"/></svg><span>3D 对象</span></div>
    <div class="row"><svg><use href="#s-film"/></svg><span>视频</span></div>
    <div class="row"><svg><use href="#s-pic"/></svg><span>图片</span></div>
    <div class="row"><svg><use href="#s-doc"/></svg><span>文档</span></div>
    <div class="row"><svg><use href="#s-down"/></svg><span>下载</span></div>
    <div class="row"><svg><use href="#s-music"/></svg><span>音乐</span></div>
    <div class="row selected"><svg><use href="#s-desk"/></svg><span>桌面</span></div>
    <div class="row"><svg><use href="#s-win"/></svg><span>Windows (C:)</span></div>
    <div class="row"><svg><use href="#s-disk"/></svg><span>本地磁盘 (D:)</span></div>
    <div class="row"><svg><use href="#s-disk"/></svg><span class="wide">RECOVERY (E:)</span></div>
    <div class="row top gap"><svg><use href="#s-net"/></svg><span>网络</span></div>
  </div>

  <div class="files">
    <div class="item"><svg class="big"><use href="#folder-git"/></svg><span>.git</span></div>
    <div class="item"><svg class="big"><use href="#folder-md"/></svg><svg class="badge"><use href="#ok"/></svg><span>Dubbo</span></div>
    <div class="item"><svg class="big"><use href="#folder-md"/></svg><svg class="badge"><use href="#ok"/></svg><span>Git</span></div>
    <div class="item"><svg class="big"><use href="#folder-img"/></svg><svg class="badge"><use href="#ok"/></svg><span>img</span></div>
    <div class="item"><svg class="big"><use href="#folder-md"/></svg><svg class="badge"><use href="#ok"/></svg><span>JavaScript</span></div>
    <div class="item"><svg class="big"><use href="#folder-md2"/></svg><svg class="badge"><use href="#ok"/></svg><span>JavaSE</span></div>
    <div class="item"><svg class="big"><use href="#folder-md"/></svg><svg class="badge"><use href="#ok"/></svg><span>JavaWeb</span></div>
    <div class="item"><svg class="big"><use href="#folder-md"/></svg><svg class="badge"><use href="#ok"/></svg><span>Java设计模式</span></div>
    <div class="item"><svg class="big"><use href="#folder-md"/></svg><svg class="badge"><use href="#ok"/></svg><span>JDBC</span></div>
    <div class="item"><svg class="big"><use href="#folder-md"/></svg><svg class="badge"><use href="#bad"/></svg><span>Linux</span></div>
    <div class="item"><svg class="big"><use href="#folder-md"/></svg><svg class="badge"><use href="#ok"/></svg><span>Maven</span></div>
    <div class="item"><svg class="big"><use href="#folder-md2"/></svg><svg class="badge"><use href="#ok"/></svg><span>MyBatis</span></div>
    <div class="item"><svg class="big"><use href="#folder-md"/></svg><svg class="badge"><use href="#ok"/></svg><span>MySQL</span></div>
    <div class="item"><svg class="big"><use href="#folder-docs"/></svg><svg class="badge"><use href="#ok"/></svg><span>New</span></div>
    <div class="item"><svg class="big"><use href="#folder-md"/></svg><svg class="badge"><use href="#bad"/></svg><span>nginx</span></div>
    <div class="item"><svg class="big"><use href="#folder"/></svg><span>Njinx</span></div>
    <div class="item"><svg class="big"><use href="#folder-md"/></svg><svg class="badge"><use href="#ok"/></svg><span>RebbitMQ</span></div>
    <div class="item"><svg class="big"><use href="#folder-md2"/></svg><svg class="badge"><use href="#ok"/></svg><span>Spring</span></div>
    <div class="item"><svg class="big"><use href="#folder-md2"/></svg><svg class="badge"><use href="#ok"/></svg><span>SpringBoot</span></div>
    <div class="item"><svg class="big"><use href="#folder-md"/></svg><svg class="badge"><use href="#bad"/></svg><span>SpringCloud</span></div>
    <div class="item"><svg class="big"><use href="#folder-docs"/></svg><svg class="badge"><use href="#ok"/></svg><span>SpringMVC</span></div>
    <div class="item"><svg class="big"><use href="#folder-md"/></svg><svg class="badge"><use href="#ok"/></svg><span>复习</span></div>
    <div class="item"><svg class="big"><use href="#file-note"/></svg><svg class="badge"><use href="#ok"/></svg><span>a.txt</span></div>
    <div class="item"><svg class="big"><use href="#file-blank"/></svg><svg class="badge"><use href="#ok"/></svg><span>LICENSE</span></div>
    <div class="item"><svg class="big"><use href="#file-md"/></svg><svg class="badge"><use href="#ok"/></svg><span class="wide">README.en.md</span></div>
    <div class="item"><svg class="big"><use href="#file-md"/></svg><svg class="badge"><use href="#ok"/></svg><span class="wide">README.md</span></div>
  </div>
</div>

<div class="status">
  <span>26 个项目</span><i class="bar"></i>
  <svg class="details" width="16" height="13" viewBox="0 0 16 13"><path d="M0 0H5V13H0Z" fill="#aaa"/><path d="M1 1H4V4H1ZM1 5H4V8H1ZM1 9H4V12H1Z" fill="#fff"/><path d="M2 2H3V3H2Z" fill="#444"/><path d="M2 6H3V7H2Z" fill="#28c"/><path d="M2 10H3V11H2Z" fill="#c22"/><path d="M6 2.500H10M12 2.500H16M6 6.500H10M12 6.500H16M6 10.500H10M12 10.500H16" stroke="#8a8a8a"/></svg>
  <div class="large"><svg width="14" height="11" viewBox="0 0 14 11"><rect width="14" height="11" fill="#fff"/><rect x="2" y="2" width="10" height="7" fill="#9cc8ee"/><path d="M2 2H12V3.500H2Z" fill="#4f94dc"/><path d="M2 5Q6 5 12 7V8H2Z" fill="#3c6a4d"/><path d="M2 8H12V9H2Z" fill="#4a9ad0"/></svg></div>
</div>
</body>
</html>
```
FILE: styles.css
```css
* { box-sizing: border-box; }

body {
  margin: 0;
  width: 1920px;
  height: 1080px;
  overflow: hidden;
  display: flex;
  flex-direction: column;
  background: #191919;
  color: #fff;
  font: 12px/16px "Open Sans", "Noto Sans CJK SC", sans-serif;
  word-spacing: 1px;
}

svg { display: block; flex: none; }
.sprite { position: absolute; }
.mark { font-family: "Open Sans", sans-serif; font-weight: 800; fill: #6e6e6e; stroke: #6e6e6e; stroke-width: 2px; }
.tiny { font-family: "Open Sans", sans-serif; fill: #444; }
.npp { font-family: "Open Sans", sans-serif; fill: #183018; }

/* Taskbar */
.taskbar {
  flex: none;
  height: 40px;
  display: flex;
  background: linear-gradient(90deg, #292c49, #242d4d 35%, #25305a 68%, #232b4b 85%, #222a48);
}
.start { width: 50px; display: flex; align-items: center; padding-left: 16px; }
.task { width: 49px; display: flex; align-items: center; justify-content: center; position: relative; }
.task svg { width: 24px; height: 24px; }
.task.open::before {
  content: "";
  position: absolute;
  top: 0;
  left: 5px;
  width: 40px;
  height: 2px;
  background: #b4b2b0;
}
.task.active { background: linear-gradient(90deg, transparent 1px, #515873 1px 45px, #2f3551 45px 46px, #434a67 46px); }
.task.active svg { margin-right: -1px; }
.task.active::before { left: 1px; width: 44px; }
.tray { margin-left: auto; display: flex; align-items: center; height: 40px; }
.wifi { margin-left: 13px; }
.vol { margin-left: 7px; }
.ime { font-size: 16px; margin-left: 8px; }
.clock {
  width: 60px;
  margin-left: 9px;
  display: flex;
  flex-direction: column;
  text-align: center;
  line-height: 19px;
  letter-spacing: 0.1px;
  padding-bottom: 1px;
}
.note { margin-left: 20px; }
.peek { width: 1px; height: 40px; margin: 0 4px 0 20px; background: #7f859b; }

/* Title bar */
.titlebar { flex: none; height: 23px; display: flex; align-items: center; background: #4c4a48; }
.grip { width: 3px; height: 13px; border: solid #7c7a78; border-width: 0 1px; }
.g1 { margin: 0 10px 0 6px; }
.tb-check { margin-right: 8px; }
.tb-drop { margin: 3px 7px 0 6px; }
.title { margin-left: 6px; }
.controls { margin-left: auto; display: flex; gap: 36px; padding: 0 20px 3px 0; }
.controls svg { width: 10px; height: 10px; fill: none; stroke: #fff; stroke-width: 1.1; }

/* Ribbon tabs */
.ribbon { flex: none; height: 26px; display: flex; background: #000; }
.tab { width: 53px; line-height: 25px; text-align: center; padding-right: 1px; }
.tab.file { width: 56px; height: 23px; line-height: 24px; padding: 0; background: #535150; }
.expand { margin: 9px 0 0 auto; color: #a8a8a8; }
.help { margin: 5px 3px 0 9px; }

/* Navigation row */
.navrow { flex: none; height: 43px; display: flex; align-items: center; background: #191919; padding: 0 12px; }
.back { margin-right: 18px; }
.fwd { margin-right: 12px; }
.hist { margin-right: 11px; }
.up { margin-right: 7px; }
.address {
  width: 1463px;
  height: 31px;
  display: flex;
  align-items: center;
  border: 1px solid #535353;
  color: #f2f2f2;
}
.a-folder { margin: 0 8px 0 2px; }
.address span { margin: 0 9px; padding-bottom: 1px; }
.address .sep + span { margin-left: 10px; }
.a-drop { margin-left: auto; color: #999; }
.refresh { width: 32px; height: 29px; margin-left: 8px; border-left: 1px solid #121212; display: flex; align-items: center; justify-content: center; }
.search {
  width: 327px;
  height: 31px;
  margin-left: 13px;
  padding-left: 14px;
  display: flex;
  align-items: center;
  gap: 12px;
  border: 1px solid #535353;
  color: #8a8a8a;
}

/* Navigation pane */
.body { flex: 1; min-height: 0; display: flex; background: #202020; }
.side { width: 159px; flex: none; padding-top: 17px; background: #191919; border-right: 2px solid #2b2b2b; overflow: hidden; }
.row { height: 24px; display: flex; align-items: center; padding: 0 2px 0 31px; margin: 0 2px 0 1px; white-space: nowrap; word-spacing: 2px; letter-spacing: 0.05px; }
.row svg { width: 16px; height: 16px; }
.row span { margin-left: 5px; }
.row .wide { letter-spacing: 0.2px; }
.row.top { padding-left: 23px; margin-right: 0; padding-right: 0; }
.row.gap { margin-top: 8px; }
.row .pin { width: 10px; height: 10px; margin-left: auto; }
.row.selected { background: linear-gradient(transparent 1px, #333 1px 23px, transparent 23px); }

/* File grid */
.files { padding: 8px 0 0 13px; display: grid; grid-template-columns: repeat(16, 109px); grid-auto-rows: 119px; align-content: start; }
.item { position: relative; text-align: center; }
.item .big { width: 109px; height: 96px; }
.item .badge { position: absolute; left: 6px; top: 67.5px; width: 29px; height: 29px; }
.item span { display: block; line-height: 20px; }
.item .wide { letter-spacing: 0.2px; }

/* Status bar */
.status {
  flex: none;
  height: 24px;
  display: flex;
  align-items: center;
  padding: 0 3px 0 14px;
  background: #333;
  border-bottom: 1px solid #e8e4e4;
}
.bar { width: 1px; height: 11px; margin-left: 10px; background: #fff; }
.details { margin-left: auto; }
.large { width: 22px; height: 23px; margin-left: 3px; display: flex; align-items: center; justify-content: center; background: #666; border: 1px solid #8c8c8c; }
```
